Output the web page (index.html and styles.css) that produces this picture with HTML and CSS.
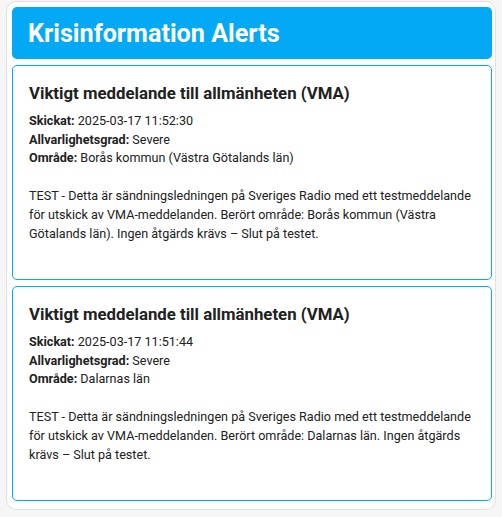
FILE: index.html
```html
<!DOCTYPE html>
<html lang="sv">
<head>
<meta charset="utf-8">
<title>Krisinformation Alerts</title>
<link rel="stylesheet" href="styles.css">
</head>
<body>
<div class="panel">
  <header class="panel-header">
    <h1 class="panel-title">Krisinformation Alerts</h1>
  </header>
  <div class="alerts">
    <article class="alert">
      <h2 class="alert-title">Viktigt meddelande till allmänheten (VMA)</h2>
      <div class="alert-meta">
        <div><b>Skickat:</b> 2025-03-17 11:52:30</div>
        <div><b>Allvarlighetsgrad:</b> Severe</div>
        <div><b>Område:</b> Borås kommun (Västra Götalands län)</div>
      </div>
      <p class="alert-text">TEST - Detta är sändningsledningen på Sveriges Radio med ett testmeddelande för utskick av VMA-meddelanden. Berört område: Borås kommun (Västra Götalands län). Ingen åtgärds krävs – Slut på testet.</p>
    </article>
    <article class="alert">
      <h2 class="alert-title">Viktigt meddelande till allmänheten (VMA)</h2>
      <div class="alert-meta">
        <div><b>Skickat:</b> 2025-03-17 11:51:44</div>
        <div><b>Allvarlighetsgrad:</b> Severe</div>
        <div><b>Område:</b> Dalarnas län</div>
      </div>
      <p class="alert-text">TEST - Detta är sändningsledningen på Sveriges Radio med ett testmeddelande för utskick av VMA-meddelanden. Berört område: Dalarnas län. Ingen åtgärds krävs – Slut på testet.</p>
    </article>
  </div>
</div>
</body>
</html>
```
FILE: styles.css
```css
html, body {
  margin: 0;
  padding: 0;
  background: #f6f6f6;
}
body {
  font-family: Roboto, "Noto Sans", sans-serif;
  color: #212121;
  padding: 1px 6px 0 6px;
}
.panel {
  width: 490px;
  box-sizing: border-box;
  background: #ffffff;
  border: 1px solid #e2e2e2;
  border-radius: 10px;
  padding: 5px 3px 8px 5px;
}
.panel-header {
  background: #03a9f4;
  border-radius: 5px;
  height: 52px;
  display: flex;
  align-items: center;
  padding: 0 16px;
}
.panel-title {
  margin: 0;
  color: #ffffff;
  font-size: 25.2px;
  line-height: 30px;
  font-weight: 700;
  position: relative;
  top: 1px;
}
.alerts {
  display: flex;
  flex-direction: column;
  gap: 6px;
  margin-top: 6px;
}
.alert {
  border: 1px solid #03a9f4;
  border-radius: 5px;
  height: 215px;
  box-sizing: border-box;
  padding: 16px;
}
.alert-title {
  margin: 0 0 8px 0;
  font-size: 16.8px;
  line-height: 22px;
  font-weight: 700;
}
.alert-meta {
  font-size: 12.6px;
  line-height: 18.6px;
}
.alert-meta b {
  font-weight: 700;
}
.alert-text {
  margin: 18px 0 0 0;
  font-size: 12.6px;
  line-height: 19px;
}
```
